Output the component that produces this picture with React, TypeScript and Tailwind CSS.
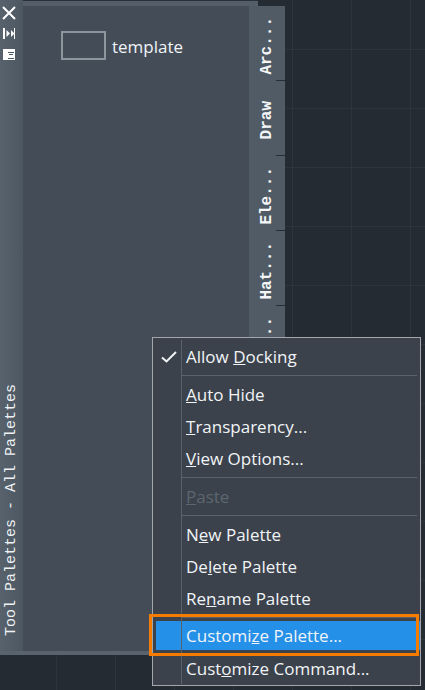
// App.tsx
import React from "react";

const tabs = ["Arc...", "Draw", "Ele...", "Hat...", "Tex..."];

const MenuSep: React.FC = () => (
	<div className="h-[6px] pt-[2px] pl-[29px] pr-[3px]">
		<div className="h-px bg-[#5c6269]" />
	</div>
);

interface MenuRowProps {
	children: React.ReactNode;
	disabled?: boolean;
}

const MenuRow: React.FC<MenuRowProps> = ({ children, disabled }) => (
	<div
		className={
			disabled
				? "h-[32px] pl-[33px] flex items-center text-[#5d6670]"
				: "h-[32px] pl-[33px] flex items-center text-[#f1f4f7]"
		}
	>
		<span>{children}</span>
	</div>
);

const CloseIcon = () => (
	<svg width="14" height="14" viewBox="0 0 14 14" className="ml-[2px] mt-[6px]">
		<path d="M1 1L13 13M13 1L1 13" stroke="#ffffff" strokeWidth="2" />
	</svg>
);

const AutoHideIcon = () => (
	<svg width="13" height="11" viewBox="0 0 13 11" className="ml-[3px] mt-[8px]">
		<path d="M0 0h2v11H0zM7 5.5L3.5 2v7zM8 2v7l3.5-3.5zM11 0h1v11h-1z" fill="#ffffff" />
	</svg>
);

const PropsIcon = () => (
	<svg width="12" height="11" viewBox="0 0 12 11" className="ml-[3px] mt-[10px]">
		<path d="M0 0h12v11H0z" fill="#ffffff" />
		<path d="M5 3h6v1H5zM6 5h4v1H6zM5 9h6v1H5z" fill="#4f5a64" />
	</svg>
);

export default function App() {
	return (
		<div className="relative w-[425px] h-[690px] overflow-hidden bg-[#242b33] bg-[linear-gradient(to_right,#2d343c_1px,transparent_1px),linear-gradient(to_bottom,#2d343c_1px,transparent_1px)] bg-[size:59px_59px] bg-[position:56px_49px]">
			<div className="w-[285px] flex flex-col">
				{/* top edge of the palette frame */}
				<div className="w-[258px] h-[6px] bg-[#535e68] border-t border-[#2a3038]" />

				<div className="flex h-[645px]">
					{/* title strip */}
					<div className="w-[23px] -mt-[6px] pb-[15px] flex flex-col justify-between bg-[linear-gradient(to_right,#57626c,#4d5761)]">
						<div className="flex flex-col items-start">
							<CloseIcon />
							<AutoHideIcon />
							<PropsIcon />
						</div>
						<div className="[writing-mode:vertical-rl] rotate-180 h-[252px] w-[23px] text-[15px] leading-[24px] text-[#eef2f5] font-['Liberation_Mono',monospace] whitespace-pre">
							Tool Palettes - All Palettes
						</div>
					</div>

					{/* palette body */}
					<div className="w-[226px] bg-[#434c57] pl-[38px] pt-[25px]">
						<div className="flex items-center gap-[6px]">
							<div className="w-[45px] h-[29px] border-2 border-[#8d959d]" />
							<span className="pt-[2px] text-[17px] text-[#f1f4f7] font-['Open_Sans',sans-serif]">template</span>
						</div>
					</div>

					{/* side tabs */}
					<div className="w-[36px] flex flex-col">
						{tabs.map((tab) => (
							<div key={tab} className="relative h-[75px] bg-[#505b65] flex justify-center items-center pt-[4px]">
								<span className="[writing-mode:vertical-rl] rotate-180 text-[16px] leading-[20px] font-bold text-[#f4f6f8] font-['Liberation_Mono',monospace] whitespace-pre">
									{tab}
								</span>
								<div className="absolute right-0 bottom-0 w-[9px] h-px bg-[#272d35]" />
							</div>
						))}
					</div>
				</div>

				{/* bottom edge */}
				<div className="w-[249px] h-[4px] bg-[#59636d]" />
			</div>

			{/* context menu */}
			<div className="absolute left-[152px] top-[337px] w-[269px] h-[349px] pt-[3px] bg-[#3b424b] border border-[#a3a7ab] text-[17px] font-['Open_Sans',sans-serif]">
				<div className="flex h-[32px] pl-[33px] items-center text-[#f1f4f7] relative">
					<svg width="16" height="12" viewBox="0 0 16 12" className="absolute left-[8px] top-[10px]">
						<path d="M1 6.5L5.5 10.5L15 1" fill="none" stroke="#f1f4f7" strokeWidth="2" />
					</svg>
					<span>
						Allow <u>D</u>ocking
					</span>
				</div>
				<MenuSep />
				<MenuRow>
					<u>A</u>uto Hide
				</MenuRow>
				<MenuRow>
					<u>T</u>ransparency...
				</MenuRow>
				<MenuRow>
					<u>V</u>iew Options...
				</MenuRow>
				<MenuSep />
				<MenuRow disabled>
					<u>P</u>aste
				</MenuRow>
				<MenuSep />
				<MenuRow>
					N<u>e</u>w Palette
				</MenuRow>
				<MenuRow>
					De<u>l</u>ete Palette
				</MenuRow>
				<MenuRow>
					Re<u>n</u>ame Palette
				</MenuRow>
				<MenuSep />
				<div className="h-[32px] pl-[3px]">
					<div className="h-[29px] pl-[30px] flex items-center bg-[#2490e8] text-[#f1f4f7]">
						<span>
							Customi<u>z</u>e Palette...
						</span>
					</div>
				</div>
				<MenuRow>
					Cust<u>o</u>mize Command...
				</MenuRow>
				{/* icon gutter line */}
				<div className="absolute left-[28px] top-[2px] bottom-[1px] w-px bg-[#5c6269]" />
			</div>

			{/* orange callout */}
			<div className="absolute left-[149px] top-[614px] w-[270px] h-[42px] border-[3px] border-[#f57c00]" />
		</div>
	);
}
